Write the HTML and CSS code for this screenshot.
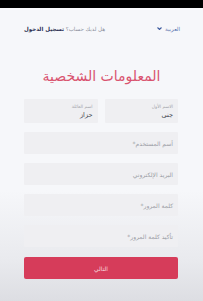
FILE: index.html
```html
<!DOCTYPE html>
<html lang="ar" dir="rtl">
<head>
<meta charset="utf-8">
<link rel="stylesheet" href="styles.css">
</head>
<body>
<div class="statusbar"></div>
<div class="screen">
  <header class="topbar">
    <div class="lang">العربية <svg class="chev" viewBox="0 0 10 6" width="5" height="3"><path d="M1 1l4 4 4-4" fill="none" stroke="#3d5a9e" stroke-width="2.2"/></svg></div>
    <div class="login">هل لديك حساب؟ <b>تسجيل الدخول</b></div>
  </header>
  <h1 class="title">المعلومات الشخصية</h1>
  <form class="form">
    <div class="row">
      <div class="field labeled"><span class="lbl">الاسم الأول</span><span class="val">جنى</span></div>
      <div class="field labeled"><span class="lbl">اسم العائلة</span><span class="val">حزاز</span></div>
    </div>
    <div class="field"><span class="ph">أسم المستخدم*</span></div>
    <div class="field"><span class="ph">البريد الإلكتروني</span></div>
    <div class="field"><span class="ph">كلمة المرور*</span></div>
    <div class="field"><span class="ph">تأكيد كلمة المرور*</span></div>
    <div class="btn">التالي</div>
  </form>
</div>
</body>
</html>
```
FILE: styles.css
```css
html, body {
  margin: 0;
  padding: 0;
}
body {
  width: 203px;
  height: 301px;
  overflow: hidden;
  font-family: "DejaVu Sans", sans-serif;
  background: #f6f7fa;
}
.statusbar {
  height: 8px;
  background: #000;
}
.screen {
  height: 293px;
  border-top: 2px solid #fbfbfd;
  box-sizing: border-box;
  background: linear-gradient(to bottom, #f6f7fa 0, #f6f7fa 180px, #e9eaee 250px, #dcdde2 293px);
}
.topbar {
  display: flex;
  justify-content: space-between;
  align-items: center;
  padding: 14px 23px 0 24px;
  font-size: 5.5px;
  color: #8b8f9c;
  height: 9px;
}
.lang {
  color: #5b76b0;
  display: flex;
  align-items: center;
  gap: 3px;
}
.chev { display: block; }
.login b {
  color: #2b2f52;
  font-weight: bold;
}
.title {
  margin: 34px 0 0;
  text-align: center;
  font-size: 14px;
  font-weight: normal;
  color: #d9536f;
  line-height: 18px;
}
.form {
  margin: 14px 25px 0 24px;
  display: flex;
  flex-direction: column;
  gap: 9px;
}
.row {
  display: flex;
  gap: 7px;
}
.row .field { flex: 1; }
.field {
  background: #efeff2;
  height: 22px;
  border-radius: 1px;
  display: flex;
  align-items: center;
  padding: 0 5px;
  font-size: 6px;
  color: #9b9da5;
}
.field.labeled {
  height: 24px;
  flex-direction: column;
  align-items: flex-start;
  justify-content: center;
  gap: 2px;
}
.lbl { font-size: 4.5px; color: #a3a5ac; }
.val { font-size: 6.5px; color: #3a3d4a; }
.btn {
  margin-top: 1px;
  height: 22px;
  border-radius: 2px;
  background: #d63c5a;
  color: #f7d6dc;
  font-size: 6px;
  display: flex;
  align-items: center;
  justify-content: center;
}
```
